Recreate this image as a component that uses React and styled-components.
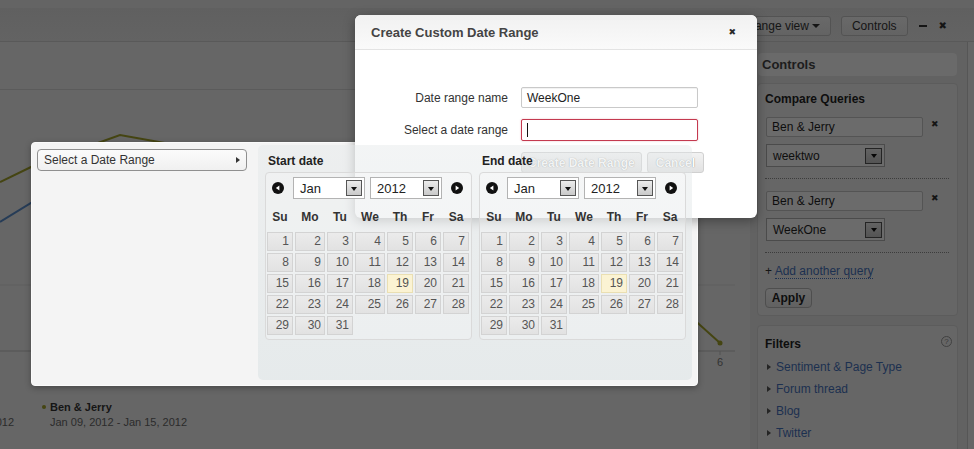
import React from "react";
import styled, { createGlobalStyle } from "styled-components";

// colours of the page that lies behind the dialog, already darkened by the backdrop
const shade = {
  page: "#666666",
  strip: "#646464",
  barTop: "#606060",
  barBottom: "#636363",
  barLine: "#595959",
  btnTop: "#696969",
  btnBottom: "#636363",
  btnLine: "#535353",
  ink: "#151515",
  inkSoft: "#2b2b2b",
  inkStrong: "#0e0e0e",
  rule: "#5b5b5b",
  side: "#626262",
  sideLine: "#565656",
  head: "#6a6a6a",
  panelLine: "#5c5c5c",
  field: "#6b6b6b",
  fieldLine: "#545454",
  arrowLine: "#242424",
  arrowTop: "#636363",
  arrowBottom: "#545454",
  dots: "#3c3c3c",
  link: "#1c3050",
  grid: "#5f5f5f",
  axis: "#525252",
  blue: "#263c57",
  olive: "#454512",
};

const GlobalStyle = createGlobalStyle`
  html, body {
    margin: 0;
    padding: 0;
  }
  body {
    width: 974px;
    height: 449px;
    overflow: hidden;
    font-family: "Liberation Sans", Arial, sans-serif;
    font-size: 12px;
    color: #333;
    background: #666666;
  }
`;

/* ---------- page underneath ---------- */

const Page = styled.div`
  display: flex;
  flex-direction: column;
  width: 974px;
  height: 449px;
  background: ${shade.page};
  color: ${shade.ink};
`;

const TopStrip = styled.div`
  height: 8px;
  flex-shrink: 0;
  background: ${shade.strip};
`;

const Toolbar = styled.div`
  height: 34px;
  flex-shrink: 0;
  box-sizing: border-box;
  padding: 2px 27px 0 0;
  border-bottom: 1px solid ${shade.barLine};
  background: linear-gradient(${shade.barTop}, ${shade.barBottom});
  display: flex;
  align-items: center;
  justify-content: flex-end;
  gap: 10px;
`;

const ToolButton = styled.div`
  height: 20px;
  box-sizing: border-box;
  padding: 0 10px;
  border: 1px solid ${shade.btnLine};
  border-radius: 3px;
  background: linear-gradient(${shade.btnTop}, ${shade.btnBottom});
  display: inline-flex;
  align-items: center;
  gap: 3px;
  font-size: 12px;
  color: ${shade.ink};
`;

const Caret = styled.span`
  width: 0;
  height: 0;
  border-left: 4px solid transparent;
  border-right: 4px solid transparent;
  border-top: 4px solid ${shade.ink};
`;

const Dash = styled.span`
  width: 8px;
  height: 2px;
  background: ${shade.ink};
  margin: 0 2px 0 1px;
`;

const CloseGlyph = styled.span`
  font-family: "DejaVu Sans", sans-serif;
  font-size: ${({ $size }) => $size || 9}px;
  line-height: 1;
  color: ${({ $color }) => $color || "#2a2a2a"};
`;

const Body = styled.div`
  display: flex;
  flex: 1;
  min-height: 0;
`;

const Main = styled.div`
  flex: 1;
  min-width: 0;
  display: flex;
  flex-direction: column;
  overflow: hidden;
`;

const MainHeader = styled.div`
  height: 47px;
  flex-shrink: 0;
  border-bottom: 1px solid ${shade.rule};
`;

const Chart = styled.svg`
  display: block;
  flex-shrink: 0;
`;

const Legend = styled.div`
  display: flex;
  gap: 28px;
  margin: 20px 0 0 -131px;
`;

const LegendItem = styled.div`
  display: flex;
  gap: 4px;
  align-items: flex-start;
`;

const Bullet = styled.span`
  width: 4px;
  height: 4px;
  border-radius: 50%;
  margin-top: 5px;
  background: ${({ $color }) => $color};
`;

const LegendName = styled.div`
  font-size: 11px;
  line-height: 15px;
  font-weight: bold;
  color: ${shade.ink};
  white-space: nowrap;
`;

const LegendDate = styled.div`
  font-size: 11px;
  line-height: 15px;
  color: ${shade.inkSoft};
  white-space: nowrap;
`;

const Sidebar = styled.aside`
  width: 201px;
  flex-shrink: 0;
  padding: 11px 9px 0 7px;
  margin-right: 6px;
  background: ${shade.side};
  border-right: 1px solid ${shade.sideLine};
  display: flex;
  flex-direction: column;
`;

const SideHeader = styled.div`
  height: 23px;
  line-height: 23px;
  padding-left: 4px;
  margin: 0 1px;
  border-radius: 4px;
  background: ${shade.head};
  font-size: 13px;
  font-weight: bold;
  color: #1d1d1d;
`;

const Panel = styled.div`
  margin-top: ${({ $top }) => $top}px;
  border: 1px solid ${shade.panelLine};
  border-radius: 4px;
  background: ${shade.page};
  padding: ${({ $pad }) => $pad};
`;

const PanelTitle = styled.div`
  display: flex;
  justify-content: space-between;
  align-items: center;
  font-weight: bold;
  font-size: 12px;
  line-height: 16px;
  color: ${shade.inkStrong};
`;

const Help = styled.span`
  width: 9px;
  height: 9px;
  border: 1px solid #414141;
  border-radius: 50%;
  font-size: 8px;
  line-height: 9px;
  text-align: center;
  font-weight: normal;
  color: #393939;
  margin: -5px -3px 0 0;
`;

const QueryRow = styled.div`
  display: flex;
  align-items: flex-start;
  margin-top: ${({ $top }) => $top}px;
`;

const SideInput = styled.div`
  width: 157px;
  height: 20px;
  box-sizing: border-box;
  margin-left: 1px;
  padding-left: 5px;
  border: 1px solid ${shade.fieldLine};
  border-radius: 2px;
  background: ${shade.field};
  display: flex;
  align-items: center;
  font-size: 12px;
  color: ${shade.inkStrong};
`;

const RemoveX = styled(CloseGlyph)`
  margin: 3px 0 0 8px;
`;

const Select = styled.div`
  width: ${({ $w }) => $w}px;
  height: ${({ $h }) => $h}px;
  box-sizing: border-box;
  margin-top: ${({ $top }) => $top || 0}px;
  margin-left: ${({ $ml }) => $ml || 0}px;
  border: 1px solid ${({ $dim }) => ($dim ? "#4b4b4b" : "#b3b3b3")};
  background: ${({ $dim }) => ($dim ? shade.field : "#fff")};
  padding: 0 2px 0 6px;
  display: flex;
  align-items: center;
  justify-content: space-between;
  font-size: ${({ $size }) => $size}px;
  color: ${({ $dim }) => ($dim ? shade.inkStrong : "#222")};
`;

const SelectArrow = styled.span`
  width: ${({ $w }) => $w || 16}px;
  height: 16px;
  box-sizing: border-box;
  border: 1px solid ${({ $dim }) => ($dim ? shade.arrowLine : "#555")};
  background: ${({ $dim }) =>
    $dim
      ? `linear-gradient(${shade.arrowTop}, ${shade.arrowBottom})`
      : "linear-gradient(#ececec, #c9c9c9)"};
  display: flex;
  align-items: center;
  justify-content: center;

  &::after {
    content: "";
    border-left: 3.5px solid transparent;
    border-right: 3.5px solid transparent;
    border-top: 4px solid ${({ $dim }) => ($dim ? "#070707" : "#111")};
    margin-top: 1px;
  }
`;

const Separator = styled.div`
  border-top: 1px dotted ${shade.dots};
  margin: 11px 0 0;
`;

const AddLine = styled.div`
  margin-top: 10px;
  line-height: 16px;
  font-size: 12px;
  color: ${shade.ink};
`;

const Link = styled.a`
  color: ${shade.link};
  text-decoration: none;
  border-bottom: ${({ $dotted }) => ($dotted ? "1px dotted" : "none")};
`;

const ApplyButton = styled.div`
  margin-top: 9px;
  width: 47px;
  height: 20px;
  box-sizing: border-box;
  border: 1px solid #4e4e4e;
  border-radius: 4px;
  background: linear-gradient(#6a6a6a, #616161);
  display: flex;
  align-items: center;
  justify-content: center;
  font-weight: bold;
  font-size: 12px;
  color: ${shade.inkStrong};
`;

const FilterList = styled.div`
  margin-top: 4px;
`;

const FilterItem = styled.div`
  display: flex;
  align-items: center;
  gap: 5px;
  height: 22px;
  padding-left: 2px;
  font-size: 12px;

  &::before {
    content: "";
    border-top: 3.5px solid transparent;
    border-bottom: 3.5px solid transparent;
    border-left: 4px solid ${shade.arrowLine};
  }
`;

/* ---------- modal and date picker ---------- */

const Modal = styled.div`
  position: absolute;
  left: 355px;
  top: 15px;
  width: 402px;
  height: 203px;
  z-index: 1;
  background: #fff;
  border-radius: 6px;
  box-shadow: 0 3px 12px rgba(0, 0, 0, 0.35);
  display: flex;
  flex-direction: column;
  overflow: hidden;
`;

const ModalHeader = styled.div`
  height: 34px;
  flex-shrink: 0;
  padding: 0 21px 0 16px;
  border-bottom: 1px solid #e3e3e3;
  background: linear-gradient(#f1f1f1, #fafafa);
  display: flex;
  align-items: center;
  justify-content: space-between;
`;

const ModalTitle = styled.div`
  font-size: 13px;
  font-weight: bold;
  color: #444;
`;

const FormGrid = styled.div`
  display: grid;
  grid-template-columns: 153px 177px;
  column-gap: 13px;
  row-gap: 11px;
  align-items: center;
  padding-top: 37px;
`;

const FormLabel = styled.label`
  text-align: right;
  font-size: 12px;
  color: #333;
`;

const FormInput = styled.div`
  width: 177px;
  height: ${({ $h }) => $h}px;
  box-sizing: border-box;
  padding-left: 5px;
  border: 1px solid ${({ $focus }) => ($focus ? "#c4394f" : "#c9c9c9")};
  box-shadow: ${({ $focus }) => ($focus ? "0 0 2px rgba(196,57,79,0.35)" : "inset 0 1px 1px rgba(0,0,0,0.06)")};
  border-radius: 2px;
  background: #fff;
  display: flex;
  align-items: center;
  font-size: 12px;
  color: #222;
`;

const Cursor = styled.span`
  width: 1px;
  height: 14px;
  background: #111;
`;

const ModalActions = styled.div`
  grid-column: 2;
  display: flex;
  gap: 5px;
  white-space: nowrap;
`;

const ModalButton = styled.div`
  height: 21px;
  flex-shrink: 0;
  box-sizing: border-box;
  padding: 0 ${({ $pad }) => $pad}px;
  border: 1px solid #d0d0d0;
  border-radius: 3px;
  background: linear-gradient(#f2f2f2, #e2e2e2);
  display: flex;
  align-items: center;
  font-weight: bold;
  font-size: 12px;
  color: #fff;
  text-shadow: 0 0 1px rgba(0, 0, 0, 0.55);
`;

const Popup = styled.div`
  position: absolute;
  left: 31px;
  top: 142px;
  width: 667px;
  height: 244px;
  box-sizing: border-box;
  padding: 2px 5px 5px 5px;
  display: flex;
  background: #f4f4f4;
  border: 1px solid #fbfbfb;
  border-radius: 4px;
  box-shadow: 0 2px 6px rgba(0, 0, 0, 0.3);
`;

const RangeMenu = styled.div`
  width: 221px;
  flex-shrink: 0;
  padding-top: 4px;
`;

const RangeItem = styled.div`
  width: 210px;
  height: 22px;
  box-sizing: border-box;
  padding: 0 6px 0 6px;
  border: 1px solid #8f8f8f;
  border-radius: 4px;
  background: linear-gradient(#fbfbfb, #f0f0f0);
  display: flex;
  align-items: center;
  justify-content: space-between;
  font-size: 12px;
  color: #333;

  &::after {
    content: "";
    border-top: 3.5px solid transparent;
    border-bottom: 3.5px solid transparent;
    border-left: 4px solid #333;
  }
`;

const CalendarPanel = styled.div`
  position: relative;
  z-index: 2;
  flex: 1;
  box-sizing: border-box;
  padding: 8px 5px 0 7px;
  border-radius: 5px;
  background: linear-gradient(rgba(228, 232, 233, 0.45), rgba(218, 226, 228, 0.55));
  display: flex;
  gap: 7px;
`;

const CalColumn = styled.div`
  width: 207px;
`;

const CalLabel = styled.div`
  padding-left: 3px;
  font-weight: bold;
  font-size: 12px;
  line-height: 16px;
  color: #222;
`;

const CalBox = styled.div`
  margin-top: 3px;
  padding: 4px 0 4px 1px;
  border: 1px solid #dadada;
  border-radius: 4px;
  background: rgba(255, 255, 255, 0.22);
`;

const NavRow = styled.div`
  height: 22px;
  display: flex;
  align-items: center;
  padding-left: 5px;
`;

const NavBtn = styled.span`
  display: flex;
  margin-left: ${({ $ml }) => $ml || 0}px;
`;

const columns = "26px 30px 26px 30px 26px 26px 26px";

const WeekHead = styled.div`
  display: grid;
  grid-template-columns: ${columns};
  column-gap: 2px;
  margin-top: 9px;
  height: 18px;
  line-height: 18px;
  text-align: center;
  font-weight: bold;
  font-size: 12px;
  color: #333;
`;

const DayGrid = styled.div`
  display: grid;
  grid-template-columns: ${columns};
  grid-auto-rows: 19px;
  gap: 2px;
  margin-top: 6px;
`;

const Day = styled.div`
  box-sizing: border-box;
  border: 1px solid ${({ $today }) => ($today ? "#eadfb2" : "#d3d3d3")};
  background: ${({ $today }) => ($today ? "#fbf3d3" : "linear-gradient(#ebebeb, #e2e2e2)")};
  padding-right: 3px;
  text-align: right;
  font-size: 12px;
  line-height: 17px;
  color: #555;
`;

const NavIcon = ({ dir }) => (
  <svg width="12" height="12" viewBox="0 0 12 12">
    <circle cx="6" cy="6" r="6" fill="#111" />
    {dir === "prev" ? (
      <path d="M3.8 6 L7.4 3.4 V8.6 Z" fill="#fff" />
    ) : (
      <path d="M8.2 6 L4.6 3.4 V8.6 Z" fill="#fff" />
    )}
  </svg>
);

const weekdays = ["Su", "Mo", "Tu", "We", "Th", "Fr", "Sa"];
const days = Array.from({ length: 31 }, (_, i) => i + 1);

const Calendar = ({ label }) => (
  <CalColumn>
    <CalLabel>{label}</CalLabel>
    <CalBox>
      <NavRow>
        <NavBtn>
          <NavIcon dir="prev" />
        </NavBtn>
        <Select $w={72} $h={22} $size={13} $ml={9}>
          Jan
          <SelectArrow />
        </Select>
        <Select $w={72} $h={22} $size={13} $ml={5}>
          2012
          <SelectArrow />
        </Select>
        <NavBtn $ml={9}>
          <NavIcon dir="next" />
        </NavBtn>
      </NavRow>
      <WeekHead>
        {weekdays.map((d) => (
          <div key={d}>{d}</div>
        ))}
      </WeekHead>
      <DayGrid>
        {days.map((d) => (
          <Day key={d} $today={d === 19}>
            {d}
          </Day>
        ))}
      </DayGrid>
    </CalBox>
  </CalColumn>
);

const QueryBlock = ({ name, range, top }) => (
  <>
    <QueryRow $top={top}>
      <SideInput>{name}</SideInput>
      <RemoveX $color={shade.ink}>✖</RemoveX>
    </QueryRow>
    <Select $dim $w={119} $h={23} $size={12} $top={7} $ml={1}>
      {range}
      <SelectArrow $dim $w={17} />
    </Select>
  </>
);

const TrendChart = () => (
  <Chart width="750" height="290" viewBox="0 0 750 290">
    <line x1="0" y1="195" x2="735" y2="195" stroke={shade.grid} />
    <line x1="0" y1="261" x2="735" y2="261" stroke={shade.axis} />
    <line x1="720" y1="261" x2="720" y2="265" stroke={shade.axis} />
    <text x="720" y="276" fontSize="11" fill="#323232" textAnchor="middle" fontFamily="Liberation Sans, Arial, sans-serif">
      6
    </text>
    <polyline points="0,132 31,113 120,80 260,110 420,150 560,190 690,215" fill="none" stroke={shade.blue} strokeWidth="2" />
    <polyline
      points="0,92 31,77 120,45 260,70 420,120 560,175 690,226 720,253"
      fill="none"
      stroke={shade.olive}
      strokeWidth="2"
    />
    <circle cx="720" cy="253" r="2.5" fill={shade.olive} />
  </Chart>
);

export default function App() {
  return (
    <>
      <GlobalStyle />
      <Page>
        <TopStrip />
        <Toolbar>
          <ToolButton>
            Change view <Caret />
          </ToolButton>
          <ToolButton>Controls</ToolButton>
          <Dash />
          <CloseGlyph $size={10} $color={shade.ink}>
            ✖
          </CloseGlyph>
        </Toolbar>
        <Body>
          <Main>
            <MainHeader />
            <TrendChart />
            <Legend>
              <LegendItem>
                <Bullet $color={shade.blue} />
                <div>
                  <LegendName>Ben &amp; Jerry</LegendName>
                  <LegendDate>Jan 02, 2012 - Jan 08, 2012</LegendDate>
                </div>
              </LegendItem>
              <LegendItem>
                <Bullet $color={shade.olive} />
                <div>
                  <LegendName>Ben &amp; Jerry</LegendName>
                  <LegendDate>Jan 09, 2012 - Jan 15, 2012</LegendDate>
                </div>
              </LegendItem>
            </Legend>
          </Main>
          <Sidebar>
            <SideHeader>Controls</SideHeader>
            <Panel $top={7} $pad="7px 8px 7px 7px">
              <PanelTitle>Compare Queries</PanelTitle>
              <QueryBlock name="Ben & Jerry" range="weektwo" top={10} />
              <Separator />
              <QueryBlock name="Ben & Jerry" range="WeekOne" top={12} />
              <Separator />
              <AddLine>
                + <Link $dotted>Add another query</Link>
              </AddLine>
              <ApplyButton>Apply</ApplyButton>
            </Panel>
            <Panel $top={9} $pad="10px 8px 20px 7px">
              <PanelTitle>
                Filters
                <Help>?</Help>
              </PanelTitle>
              <FilterList>
                <FilterItem>
                  <Link>Sentiment &amp; Page Type</Link>
                </FilterItem>
                <FilterItem>
                  <Link>Forum thread</Link>
                </FilterItem>
                <FilterItem>
                  <Link>Blog</Link>
                </FilterItem>
                <FilterItem>
                  <Link>Twitter</Link>
                </FilterItem>
              </FilterList>
            </Panel>
          </Sidebar>
        </Body>
      </Page>

      <Popup>
        <RangeMenu>
          <RangeItem>Select a Date Range</RangeItem>
        </RangeMenu>
        <CalendarPanel>
          <Calendar label="Start date" />
          <Calendar label="End date" />
        </CalendarPanel>
      </Popup>

      <Modal>
        <ModalHeader>
          <ModalTitle>Create Custom Date Range</ModalTitle>
          <CloseGlyph>✖</CloseGlyph>
        </ModalHeader>
        <FormGrid>
          <FormLabel>Date range name</FormLabel>
          <FormInput $h={21}>WeekOne</FormInput>
          <FormLabel>Select a date range</FormLabel>
          <FormInput $h={22} $focus>
            <Cursor />
          </FormInput>
          <ModalActions>
            <ModalButton $pad={6}>Create Date Range</ModalButton>
            <ModalButton $pad={8}>Cancel</ModalButton>
          </ModalActions>
        </FormGrid>
      </Modal>
    </>
  );
}
